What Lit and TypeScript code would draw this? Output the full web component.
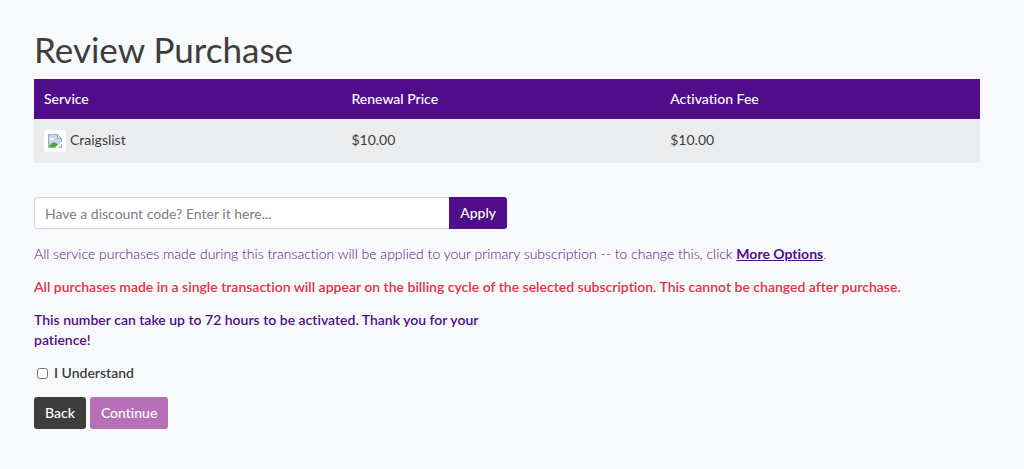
import { LitElement, html, css, svg } from "lit";
import { customElement, state } from "lit/decorators.js";

interface Service {
  name: string;
  renewal: string;
  activation: string;
}

const missingImage = svg`
  <path d="M.5.5h9l4 4v9H.5z" fill="#c6d6f3" stroke="#a3a6aa"/>
  <path d="M9.5.5v4h4z" fill="#fff" stroke="#a3a6aa"/>
  <path d="M2 5.5C2 4 4 3.500 4.500 4.500 6 4 6.500 6 5.500 6H2z" fill="#fff"/>
  <path d="M1 13c1-3 3-4.500 5-4.500 2 0 3 1 4 2L7.500 13z" fill="#4ea93b"/>
  <path d="M6.500 14.500 14.500 7v2.500L9.500 14.500z" fill="#fff"/>`;

@customElement("app-root")
export class AppRoot extends LitElement {
  @state() private understood = false;

  private services: Service[] = [
    { name: "Craigslist", renewal: "$10.00", activation: "$10.00" },
  ];

  static styles = css`
    :host {
      display: block;
      box-sizing: border-box;
      min-height: 100vh;
      padding: 32px 44px 40px 34px;
      background: #f8f9fb;
      color: #3d3d3d;
      font: 14px/20px Lato, "Open Sans", sans-serif;
      font-variant-ligatures: none;
    }
    * {
      box-sizing: border-box;
    }
    h1 {
      margin: 0 0 12px;
      font-size: 35px;
      line-height: 35px;
      font-weight: 400;
    }
    .services {
      width: 100%;
      border-collapse: collapse;
      table-layout: fixed;
      margin-bottom: 34px;
    }
    .services th,
    .services td {
      padding: 10px;
      text-align: left;
      vertical-align: top;
    }
    .services th {
      background: #500d8a;
      color: #fff;
      font-weight: 500;
    }
    .services td {
      background: #ebeced;
      padding: 11px 10px;
    }
    .first {
      width: 32.5%;
    }
    .middle {
      width: 33.7%;
    }
    .service {
      display: flex;
      gap: 4px;
    }
    .thumb {
      display: block;
      width: 22px;
      height: 22px;
      padding: 4px;
      border-radius: 3px;
      background: #fff;
    }
    .discount {
      display: flex;
      width: 50%;
      margin-bottom: 15px;
    }
    .code {
      flex: 1;
      min-width: 0;
      height: 32px;
      padding: 0 10px;
      border: 1px solid #ced4da;
      border-right: 0;
      border-radius: 4px 0 0 4px;
      background: #fff;
      color: inherit;
      font: inherit;
    }
    .code::placeholder {
      color: #798086;
      opacity: 1;
    }
    .button {
      height: 32px;
      padding: 0 11px;
      border: 0;
      border-radius: 3px;
      color: #fff;
      font: inherit;
      font-weight: 500;
    }
    .apply {
      border-radius: 0 3px 3px 0;
      background: #500d8a;
    }
    .back {
      background: #3d3d3d;
    }
    .continue {
      background: #b76fb5;
    }
    p {
      margin: 0 0 13px;
    }
    .note {
      color: #500d8a;
      font-weight: 300;
    }
    .note a {
      color: inherit;
      font-weight: 700;
    }
    .warning {
      color: #dc3545;
      font-weight: 600;
    }
    .delay {
      max-width: 50%;
      color: #500d8a;
      font-weight: 600;
    }
    .agree {
      display: flex;
      align-items: center;
      gap: 6px;
      width: fit-content;
      margin-bottom: 14px;
      font-weight: 600;
    }
    .agree input {
      width: 11px;
      height: 11px;
      margin: 0 0 0 3px;
    }
    .actions {
      display: flex;
      gap: 4px;
    }
  `;

  render() {
    return html`
      <h1>Review Purchase</h1>
      <table class="services">
        <thead>
          <tr>
            <th class="first" scope="col">Service</th>
            <th class="middle" scope="col">Renewal Price</th>
            <th scope="col">Activation Fee</th>
          </tr>
        </thead>
        <tbody>
          ${this.services.map(
            (s) => html`<tr>
              <td>
                <div class="service">
                  <svg class="thumb" viewBox="0 0 14 14" aria-hidden="true">${missingImage}</svg>
                  <span>${s.name}</span>
                </div>
              </td>
              <td>${s.renewal}</td>
              <td>${s.activation}</td>
            </tr>`
          )}
        </tbody>
      </table>
      <form class="discount" @submit=${(e: Event) => e.preventDefault()}>
        <input class="code" type="text" aria-label="Discount code" placeholder="Have a discount code? Enter it here..." />
        <button class="button apply" type="submit">Apply</button>
      </form>
      <p class="note">
        All service purchases made during this transaction will be applied to your primary subscription -- to change
        this, click <a href="#options">More Options</a>.
      </p>
      <p class="warning">
        All purchases made in a single transaction will appear on the billing cycle of the selected subscription. This
        cannot be changed after purchase.
      </p>
      <p class="delay">This number can take up to 72 hours to be activated. Thank you for your patience!</p>
      <label class="agree">
        <input
          type="checkbox"
          .checked=${this.understood}
          @change=${(e: Event) => (this.understood = (e.target as HTMLInputElement).checked)}
        />
        I Understand
      </label>
      <div class="actions">
        <button class="button back" type="button">Back</button>
        <button class="button continue" type="button" aria-disabled=${this.understood ? "false" : "true"}>Continue</button>
      </div>
    `;
  }
}
